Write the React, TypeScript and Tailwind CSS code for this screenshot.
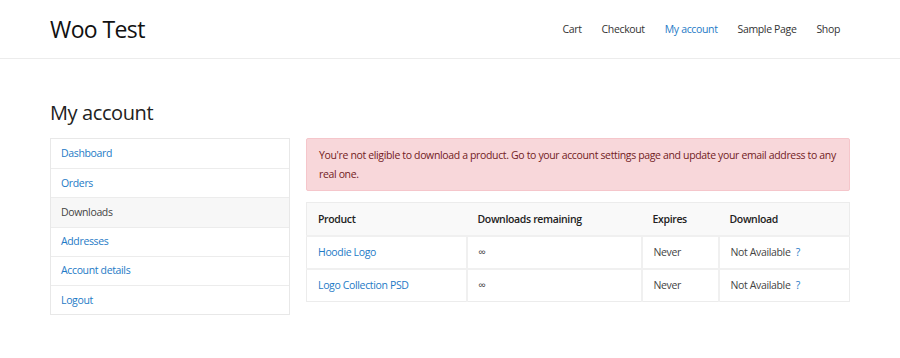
const navItems = ["Cart", "Checkout", "My account", "Sample Page", "Shop"];

const menu = ["Dashboard", "Orders", "Downloads", "Addresses", "Account details", "Logout"];

const downloads = [
  { product: "Hoodie Logo", remaining: "∞", expires: "Never" },
  { product: "Logo Collection PSD", remaining: "∞", expires: "Never" },
];

export default function App() {
  return (
    <div className="min-h-[358px] w-full bg-white text-[#333] font-['Open_Sans',sans-serif]">
      {/* Header */}
      <header className="flex h-[59px] items-center justify-between border-b border-[#ececec] pl-[50px] pr-[60px]">
        <div className="text-[23px] leading-none tracking-[-0.6px] text-[#111]">Woo Test</div>
        <nav className="flex items-center gap-[20px] pt-[2px] text-[10.5px] tracking-[-0.35px]">
          {navItems.map((item) => (
            <a key={item} className={item === "My account" ? "text-[#1e7ac6]" : "text-[#333]"}>
              {item}
            </a>
          ))}
        </nav>
      </header>

      <main className="px-[50px] pt-[44px]">
        <h1 className="text-[20px] leading-none text-[#222] tracking-[-0.4px]">My account</h1>

        <div className="mt-[14px] flex items-start gap-[16px] text-[10.5px] tracking-[-0.35px]">
          {/* Sidebar */}
          <ul className="mt-[1px] w-[240px] shrink-0 border border-[#e8e8e8]">
            {menu.map((item, i) => (
              <li
                key={item}
                className={
                  "flex h-[29.2px] items-center px-[10px] pt-[1px] " +
                  (i > 0 ? "border-t border-[#ececec] " : "") +
                  (item === "Downloads" ? "bg-[#f7f7f7] text-[#444]" : "text-[#1e7ac6]")
                }
              >
                {item}
              </li>
            ))}
          </ul>

          {/* Content */}
          <div className="flex-1">
            <div className="mt-[1px] rounded-[2px] border border-[#f5c6cb] bg-[#f8d7da] px-[12px] pb-[6px] pt-[7px] leading-[19px] text-[#721c24]">
              You're not eligible to download a product. Go to your account settings page and update your email address to any real one.
            </div>

            <table className="mt-[11px] w-full border-collapse border border-[#ececec]">
              <thead>
                <tr className="h-[33px] bg-[#f9f9f9] text-left text-[#222]">
                  <th className="w-[160px] px-[11px] pt-[3px] font-semibold">Product</th>
                  <th className="w-[175px] px-[11px] pt-[3px] font-semibold">Downloads remaining</th>
                  <th className="w-[77px] px-[11px] pt-[3px] font-semibold">Expires</th>
                  <th className="px-[11px] pt-[3px] font-semibold">Download</th>
                </tr>
              </thead>
              <tbody>
                {downloads.map((d) => (
                  <tr key={d.product} className="h-[33px] border-t-2 border-[#f0f0f0]">
                    <td className="px-[11px] pt-[1px] text-[#1e7ac6]">{d.product}</td>
                    <td className="border-l-2 border-[#f0f0f0] px-[11px] pt-[1px] text-[#444]">{d.remaining}</td>
                    <td className="border-l-2 border-[#f0f0f0] px-[11px] pt-[1px] text-[#444]">{d.expires}</td>
                    <td className="border-l-2 border-[#f0f0f0] px-[11px] pt-[1px] text-[#444]">
                      Not Available <span className="ml-[3px] text-[#1e7ac6]">?</span>
                    </td>
                  </tr>
                ))}
              </tbody>
            </table>
          </div>
        </div>
      </main>
    </div>
  );
}
